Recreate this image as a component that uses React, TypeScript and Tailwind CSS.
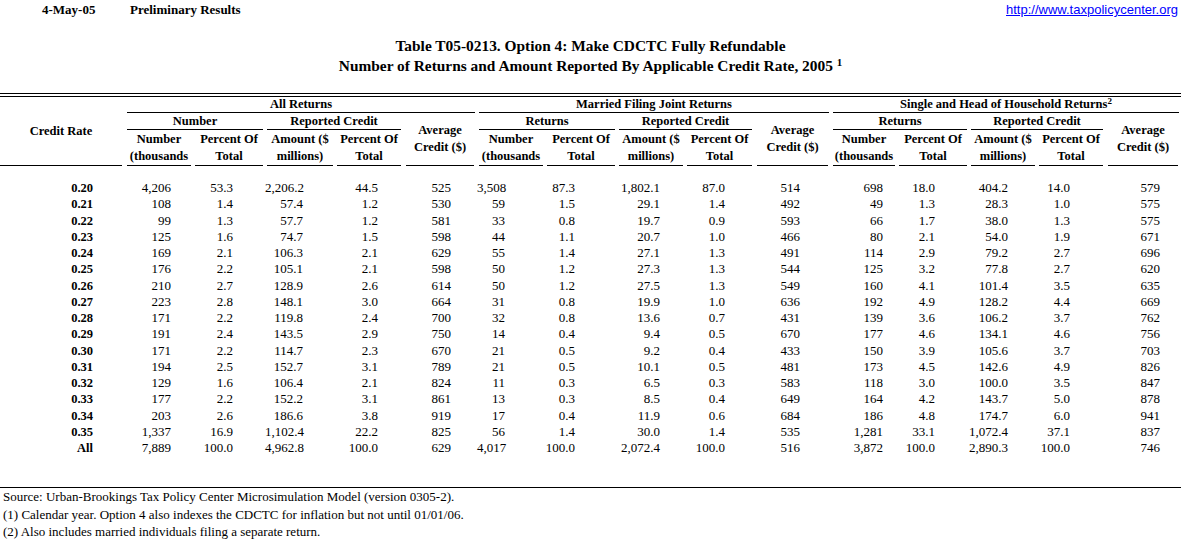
import React from "react";

const GRID =
  "grid grid-cols-[125px_68px_72px_70px_68px_74px_68px_72px_68px_69px_77px_66px_72px_68px_68px_76px]";

const PR = [
  "pr-[32px]",
  "pr-[22px]",
  "pr-[32px]",
  "pr-[32px]",
  "pr-[25px]",
  "pr-[26px]",
  "pr-[40px]",
  "pr-[42px]",
  "pr-[25px]",
  "pr-[29px]",
  "pr-[31px]",
  "pr-[14px]",
  "pr-[34px]",
  "pr-[29px]",
  "pr-[35px]",
  "pr-[21px]",
];

const rows: string[][] = [
  ["0.20", "4,206", "53.3", "2,206.2", "44.5", "525", "3,508", "87.3", "1,802.1", "87.0", "514", "698", "18.0", "404.2", "14.0", "579"],
  ["0.21", "108", "1.4", "57.4", "1.2", "530", "59", "1.5", "29.1", "1.4", "492", "49", "1.3", "28.3", "1.0", "575"],
  ["0.22", "99", "1.3", "57.7", "1.2", "581", "33", "0.8", "19.7", "0.9", "593", "66", "1.7", "38.0", "1.3", "575"],
  ["0.23", "125", "1.6", "74.7", "1.5", "598", "44", "1.1", "20.7", "1.0", "466", "80", "2.1", "54.0", "1.9", "671"],
  ["0.24", "169", "2.1", "106.3", "2.1", "629", "55", "1.4", "27.1", "1.3", "491", "114", "2.9", "79.2", "2.7", "696"],
  ["0.25", "176", "2.2", "105.1", "2.1", "598", "50", "1.2", "27.3", "1.3", "544", "125", "3.2", "77.8", "2.7", "620"],
  ["0.26", "210", "2.7", "128.9", "2.6", "614", "50", "1.2", "27.5", "1.3", "549", "160", "4.1", "101.4", "3.5", "635"],
  ["0.27", "223", "2.8", "148.1", "3.0", "664", "31", "0.8", "19.9", "1.0", "636", "192", "4.9", "128.2", "4.4", "669"],
  ["0.28", "171", "2.2", "119.8", "2.4", "700", "32", "0.8", "13.6", "0.7", "431", "139", "3.6", "106.2", "3.7", "762"],
  ["0.29", "191", "2.4", "143.5", "2.9", "750", "14", "0.4", "9.4", "0.5", "670", "177", "4.6", "134.1", "4.6", "756"],
  ["0.30", "171", "2.2", "114.7", "2.3", "670", "21", "0.5", "9.2", "0.4", "433", "150", "3.9", "105.6", "3.7", "703"],
  ["0.31", "194", "2.5", "152.7", "3.1", "789", "21", "0.5", "10.1", "0.5", "481", "173", "4.5", "142.6", "4.9", "826"],
  ["0.32", "129", "1.6", "106.4", "2.1", "824", "11", "0.3", "6.5", "0.3", "583", "118", "3.0", "100.0", "3.5", "847"],
  ["0.33", "177", "2.2", "152.2", "3.1", "861", "13", "0.3", "8.5", "0.4", "649", "164", "4.2", "143.7", "5.0", "878"],
  ["0.34", "203", "2.6", "186.6", "3.8", "919", "17", "0.4", "11.9", "0.6", "684", "186", "4.8", "174.7", "6.0", "941"],
  ["0.35", "1,337", "16.9", "1,102.4", "22.2", "825", "56", "1.4", "30.0", "1.4", "535", "1,281", "33.1", "1,072.4", "37.1", "837"],
  ["All", "7,889", "100.0", "4,962.8", "100.0", "629", "4,017", "100.0", "2,072.4", "100.0", "516", "3,872", "100.0", "2,890.3", "100.0", "746"],
];

function TwoLine({ a, b }: { a: string; b: string }) {
  return (
    <div className="mx-[2px] flex flex-col items-center justify-center border-b border-black text-center leading-[17px] whitespace-nowrap overflow-hidden">
      <span>{a}</span>
      <span>{b}</span>
    </div>
  );
}

function GroupHeader({ title, sup }: { title: string; sup?: string }) {
  return (
    <div className="col-span-5 mx-[2px] flex items-center justify-center border-b border-black whitespace-nowrap">
      <span>
        {title}
        {sup ? <sup className="text-[9px]">{sup}</sup> : null}
      </span>
    </div>
  );
}

export default function App() {
  return (
    <div className="w-[1181px] h-[539px] overflow-hidden bg-white text-black font-['Liberation_Serif',serif]">
      {/* top bar */}
      <div className="flex h-[20px] items-center pl-[42px] pr-[3px] text-[13px] font-bold">
        <span className="w-[88px]">4-May-05</span>
        <span>Preliminary Results</span>
        <a
          href="#"
          className="ml-auto font-['Liberation_Sans',sans-serif] text-[13px] font-normal text-[#0000ff] underline"
        >
          http://www.taxpolicycenter.org
        </a>
      </div>

      {/* title */}
      <div className="mt-[16px] text-center text-[15.4px] font-bold leading-[20px]">
        <div>Table T05-0213. Option 4: Make CDCTC Fully Refundable</div>
        <div>
          Number of Returns and Amount Reported By Applicable Credit Rate, 2005{" "}
          <sup className="text-[11px]">1</sup>
        </div>
      </div>

      {/* double rule */}
      <div className="mt-[17px] h-[4px] border-t border-b border-black" />

      {/* header grid */}
      <div className={`${GRID} grid-rows-[16px_17px_36px] text-[12.5px] font-bold`}>
        <div className="row-span-3 mr-[3px] flex items-center justify-center border-b border-black">
          Credit Rate
        </div>
        <GroupHeader title="All Returns" />
        <GroupHeader title="Married Filing Joint Returns" />
        <GroupHeader title="Single and Head of Household Returns" sup="2" />

        {["Number", "Returns", "Returns"].map((first, i) => (
          <React.Fragment key={i}>
            <div className="col-span-2 mx-[2px] flex items-center justify-center border-b border-black">
              {first}
            </div>
            <div className="col-span-2 mx-[2px] flex items-center justify-center border-b border-black">
              Reported Credit
            </div>
            <div className="row-span-2 mx-[3px] flex flex-col items-center justify-center border-b border-black leading-[17px]">
              <span>Average</span>
              <span>Credit ($)</span>
            </div>
          </React.Fragment>
        ))}

        {[0, 1, 2].map((i) => (
          <React.Fragment key={i}>
            <TwoLine a="Number" b="(thousands" />
            <TwoLine a="Percent Of" b="Total" />
            <TwoLine a="Amount ($" b="millions)" />
            <TwoLine a="Percent Of" b="Total" />
          </React.Fragment>
        ))}
      </div>

      {/* data */}
      <div className="mt-[14px] text-[13px]">
        {rows.map((r, ri) => (
          <div key={ri} className={`${GRID} h-[16.25px] items-center leading-[16px]`}>
            {r.map((v, ci) => (
              <div
                key={ci}
                className={`text-right whitespace-nowrap ${PR[ci]} ${ci === 0 ? "text-[12.5px] font-bold" : ""}`}
              >
                {v}
              </div>
            ))}
          </div>
        ))}
      </div>

      {/* footer */}
      <div className="mt-[31px] border-t border-black pl-[3px] text-[13px] leading-[17.5px]">
        <div>Source: Urban-Brookings Tax Policy Center Microsimulation Model (version 0305-2).</div>
        <div>(1) Calendar year. Option 4 also indexes the CDCTC for inflation but not until 01/01/06.</div>
        <div>(2) Also includes married individuals filing a separate return.</div>
      </div>
    </div>
  );
}
